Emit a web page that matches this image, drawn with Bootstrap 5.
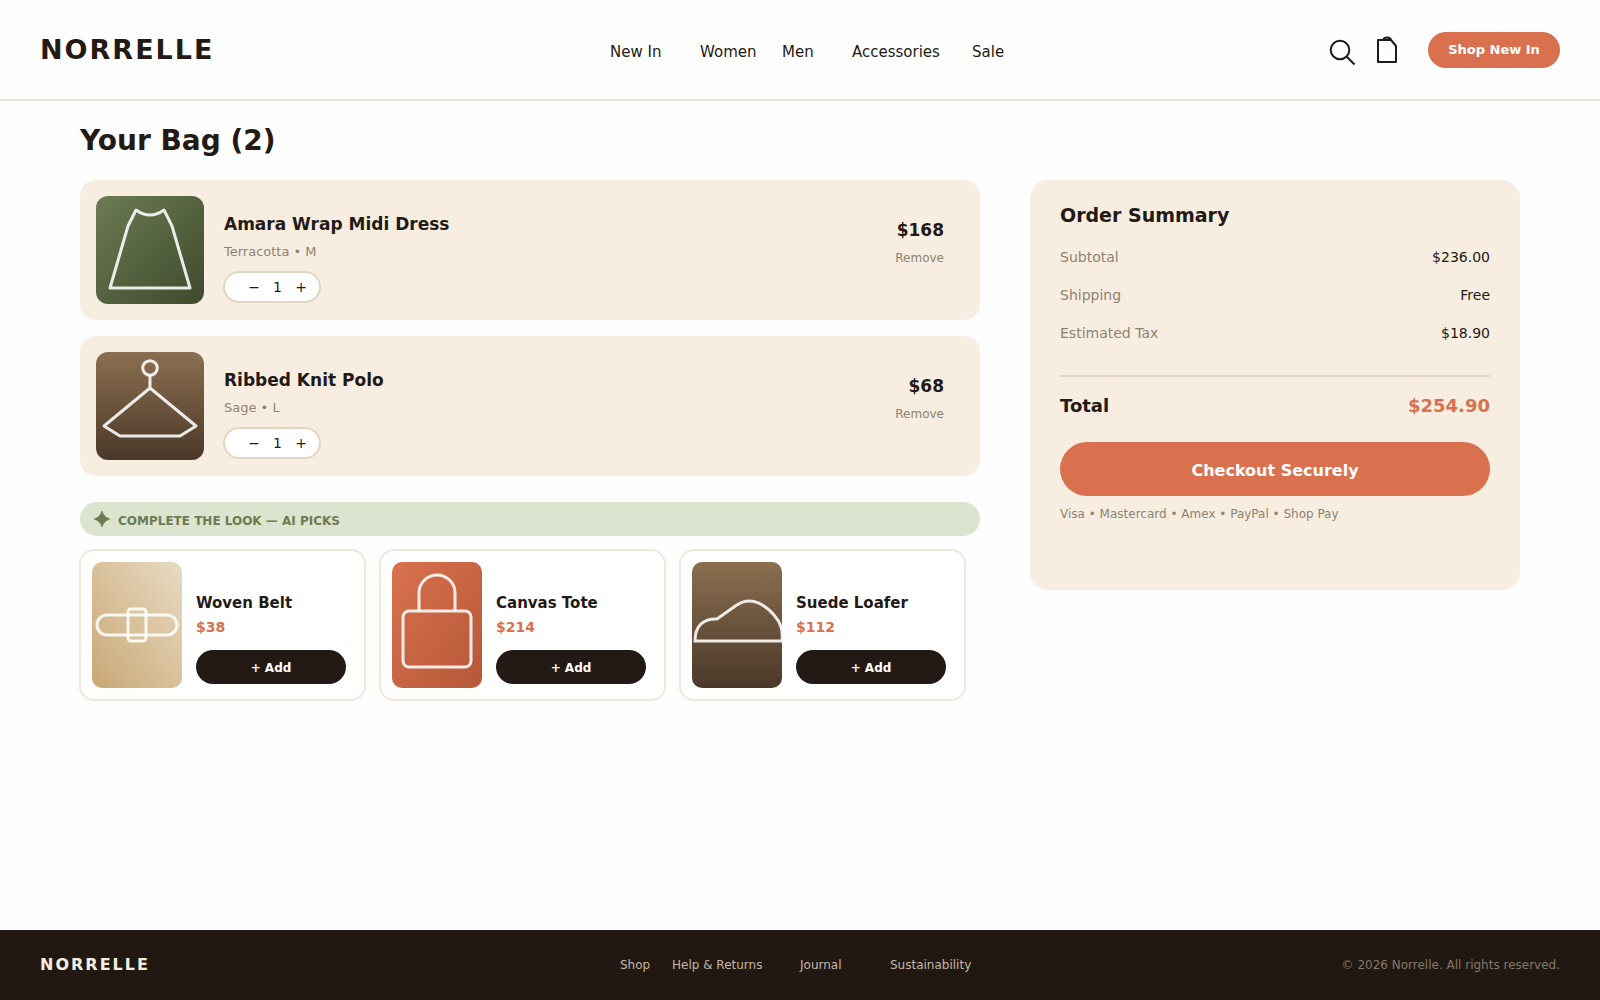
<!DOCTYPE html>
<html lang="en">
<head>
<meta charset="utf-8">
<meta name="viewport" content="width=device-width, initial-scale=1">
<title>Your Bag – Norrelle</title>
<link href="https://cdn.jsdelivr.net/npm/bootstrap@5.3.0/dist/css/bootstrap.min.css" rel="stylesheet">
<style>
  :root { --ink: #231a15; --clay: #d9714e; --cream: #f7eee1; --sand: #eadfd0; --line: #e2d5c2; --muted: #8f8272; --sage: #6b7b52; }
  body { font-family: "DejaVu Sans", sans-serif; color: var(--ink); background: #fefefe; font-size: 14px; line-height: 20px; }
  a { color: inherit; text-decoration: none; }
  .site-header { padding: 32px 40px 31px; border-bottom: 2px solid var(--sand); }
  .side { flex: 1 1 0; }
  .brand { font-size: 27px; line-height: 32px; font-weight: 700; letter-spacing: 2px; }
  .menu { display: grid; grid-template-columns: 90px 82px 70px 120px 46px; font-size: 15px; padding-top: 3px; margin-left: 28px; }
  .pill { border: 0; border-radius: 50rem; font-weight: 700; padding: 0; }
  .pill-clay, .pill-clay:hover { background: var(--clay); color: #fff; }
  .pill-ink, .pill-ink:hover { background: var(--ink); color: #fff; }
  .shop { width: 132px; height: 36px; font-size: 13px; }
  .icon-btn { background: none; border: 0; padding: 0; display: flex; color: var(--ink); }
  main { padding: 20px 80px 40px; }
  h1 { font-size: 28px; line-height: 40px; font-weight: 700; margin: 0 0 19px; }
  .bag-grid { display: grid; grid-template-columns: 90fr 49fr; column-gap: 50px; align-items: start; }
  .bag-item { background: var(--cream); border-radius: 16px; padding: 16px 36px 16px 16px; gap: 20px; margin-bottom: 16px; }
  .thumb { border-radius: 12px; width: 108px; height: 108px; flex: none; overflow: hidden; }
  .thumb svg, .pick-img svg { display: block; fill: none; stroke: #fff; stroke-opacity: .88; stroke-width: 3; }
  .olive { background: linear-gradient(to bottom right, #6b7b52, #3f4a2d); }
  .brown { background: linear-gradient(#8b6f50, #4a3829); }
  .straw { background: linear-gradient(to top right, #c9a775, #e8dbc3); }
  .clay { background: linear-gradient(to bottom right, #d9714e, #b55838); }
  .item-name, .item-price { font-size: 17px; font-weight: 700; line-height: 24px; margin: 0; }
  .item-info { padding-top: 16px; }
  .item-opts { font-size: 13px; margin: 6px 0 9px; color: var(--muted); }
  .item-end { padding-top: 22px; }
  .remove { font-size: 12px; color: var(--muted); margin-top: 6px; }
  .stepper { width: 98px; height: 32px; margin-left: -1px; border: 2px solid var(--line); border-radius: 16px; background: #fff; padding-left: 21px; }
  .stepper button { border: 0; background: none; padding: 0; width: 16px; color: inherit; }
  .stepper input { border: 0; background: none; padding: 0; width: 31px; text-align: center; color: inherit; }
  .look { background: #dce4cf; color: var(--sage); border-radius: 17px; height: 34px; padding: 3px 14px 0; gap: 8px; font-size: 12px; font-weight: 700; margin: 26px 0 13px; }
  .look svg { margin-top: -3px; }
  .picks { display: grid; grid-template-columns: repeat(3, 1fr); margin: 0 1px 0 -1px; }
  .pick { border: 2px solid #f2e7da; border-radius: 15px; background: #fff; padding: 11px 18px 11px 11px; margin-right: 13px; gap: 14px; }
  .pick-img { width: 90px; height: 126px; border-radius: 10px; overflow: hidden; flex: none; }
  .pick-name { font-size: 15px; font-weight: 700; margin: 0 0 5px; }
  .pick-price { font-size: 14px; font-weight: 700; margin-bottom: 13px; }
  .pick-price, .sum-price { color: var(--clay); }
  .add { height: 34px; font-size: 12px; padding-top: 1px; }
  .summary { background: var(--cream); border-radius: 18px; padding: 23px 30px 66px; }
  .summary h2 { font-size: 19px; line-height: 24px; font-weight: 700; margin: 0 0 20px; }
  .sum-row { margin-bottom: 18px; }
  .sum-row dt { font-weight: 400; color: var(--muted); }
  .sum-row dd, .summary dl { margin: 0; }
  .total { border-top: 2px solid var(--line); margin-top: 32px; padding-top: 17px; font-size: 18px; line-height: 24px; font-weight: 700; }
  .checkout { height: 54px; font-size: 16px; margin: 24px 0 8px; padding-top: 3px; }
  .cards-note { font-size: 12px; color: var(--muted); margin: 0; }
  footer { background: #211812; padding: 24px 40px; height: 70px; font-size: 12px; color: #c4b6a5; }
  .foot-brand { font-size: 16px; font-weight: 700; letter-spacing: 2px; color: #f7eee1; }
  .foot-menu { display: grid; grid-template-columns: 52px 128px 90px 90px; }
  .copy { color: #85776a; }
</style>
</head>
<body class="d-flex flex-column min-vh-100">
<header class="site-header d-flex align-items-center">
  <div class="side"><a class="brand" href="#">NORRELLE</a></div>
  <nav class="menu" aria-label="Main">
    <a href="#">New In</a><a href="#">Women</a><a href="#">Men</a><a href="#">Accessories</a><a href="#">Sale</a>
  </nav>
  <div class="side d-flex align-items-center justify-content-end">
    <button class="icon-btn me-3" aria-label="Search"><svg width="30" height="32" viewBox="0 0 30 32" fill="none" stroke="currentColor" stroke-width="2"><circle cx="12" cy="16" r="9.3"/><path d="M18.500 22.500l8 8"/></svg></button>
    <button class="icon-btn me-4" aria-label="Bag"><svg width="30" height="32" viewBox="0 0 30 32" fill="none" stroke="currentColor" stroke-width="2" stroke-linejoin="round"><path d="M4 6h13l5 6v16h-18zM9 6c1.500-3.500 7-3.500 8.500.500"/></svg></button>
    <button class="btn pill pill-clay shop">Shop New In</button>
  </div>
</header>

<main class="flex-grow-1">
  <h1>Your Bag (2)</h1>
  <div class="bag-grid">
    <section aria-label="Bag items">
      <article class="bag-item d-flex">
        <div class="thumb olive"><svg width="108" height="108" stroke-linejoin="round"><path d="M40 14Q54 24 68 14L76 30 94 92H14L32 30Z"/></svg></div>
        <div class="item-info flex-grow-1">
          <h3 class="item-name">Amara Wrap Midi Dress</h3>
          <p class="item-opts">Terracotta • M</p>
          <div class="stepper d-flex align-items-center"><button aria-label="Decrease dress quantity">−</button><input type="text" value="1" aria-label="Dress quantity"><button aria-label="Increase dress quantity">+</button></div>
        </div>
        <div class="item-end text-end"><div class="item-price">$168</div><div class="remove"><a href="#">Remove</a></div></div>
      </article>
      <article class="bag-item d-flex">
        <div class="thumb brown"><svg width="108" height="108" stroke-linejoin="round"><circle cx="54" cy="16" r="7.300"/><path d="M54 23V36L100 74 84 84H24L8 74 54 36"/></svg></div>
        <div class="item-info flex-grow-1">
          <h3 class="item-name">Ribbed Knit Polo</h3>
          <p class="item-opts">Sage • L</p>
          <div class="stepper d-flex align-items-center"><button aria-label="Decrease polo quantity">−</button><input type="text" value="1" aria-label="Polo quantity"><button aria-label="Increase polo quantity">+</button></div>
        </div>
        <div class="item-end text-end"><div class="item-price">$68</div><div class="remove"><a href="#">Remove</a></div></div>
      </article>

      <div class="look d-flex align-items-center"><svg width="16" height="16" viewBox="0 0 16 16" fill="currentColor"><path d="M8 0Q9.800 6.200 16 8 9.800 9.800 8 16 6.200 9.800 0 8 6.200 6.200 8 0z" stroke="currentColor" stroke-width=".6"/></svg>COMPLETE THE LOOK — AI PICKS</div>

      <div class="picks">
        <article class="pick d-flex align-items-end">
          <div class="pick-img straw"><svg width="90" height="126"><rect x="5" y="53" width="80" height="20" rx="10"/><rect x="36" y="47" width="18" height="32" rx="3"/></svg></div>
          <div class="flex-grow-1 pb-1"><h3 class="pick-name">Woven Belt</h3><div class="pick-price">$38</div><button class="btn pill pill-ink add w-100">+ Add</button></div>
        </article>
        <article class="pick d-flex align-items-end">
          <div class="pick-img clay"><svg width="90" height="126"><rect x="11" y="49" width="68" height="56" rx="6"/><path d="M27 49V31a18 18 0 0 1 36 0V49"/></svg></div>
          <div class="flex-grow-1 pb-1"><h3 class="pick-name">Canvas Tote</h3><div class="pick-price">$214</div><button class="btn pill pill-ink add w-100">+ Add</button></div>
        </article>
        <article class="pick d-flex align-items-end">
          <div class="pick-img brown"><svg width="90" height="126"><path d="M3 79C3 64 11 56.500 25 57L44 43.500C59 33 72 42 82 53 89 61 91 68 90 79Z"/></svg></div>
          <div class="flex-grow-1 pb-1"><h3 class="pick-name">Suede Loafer</h3><div class="pick-price">$112</div><button class="btn pill pill-ink add w-100">+ Add</button></div>
        </article>
      </div>
    </section>

    <aside class="summary">
      <h2>Order Summary</h2>
      <dl>
        <div class="sum-row d-flex justify-content-between"><dt>Subtotal</dt><dd>$236.00</dd></div>
        <div class="sum-row d-flex justify-content-between"><dt>Shipping</dt><dd>Free</dd></div>
        <div class="sum-row d-flex justify-content-between"><dt>Estimated Tax</dt><dd>$18.90</dd></div>
      </dl>
      <div class="total d-flex justify-content-between"><span>Total</span><span class="sum-price">$254.90</span></div>
      <button class="btn pill pill-clay checkout w-100">Checkout Securely</button>
      <p class="cards-note">Visa • Mastercard • Amex • PayPal • Shop Pay</p>
    </aside>
  </div>
</main>

<footer class="d-flex align-items-center">
  <div class="side"><a class="foot-brand" href="#">NORRELLE</a></div>
  <nav class="foot-menu" aria-label="Footer"><a href="#">Shop</a><a href="#">Help &amp; Returns</a><a href="#">Journal</a><a href="#">Sustainability</a></nav>
  <div class="side text-end copy">© 2026 Norrelle. All rights reserved.</div>
</footer>
<script src="https://cdn.jsdelivr.net/npm/bootstrap@5.3.0/dist/js/bootstrap.bundle.min.js"></script>
</body>
</html>
